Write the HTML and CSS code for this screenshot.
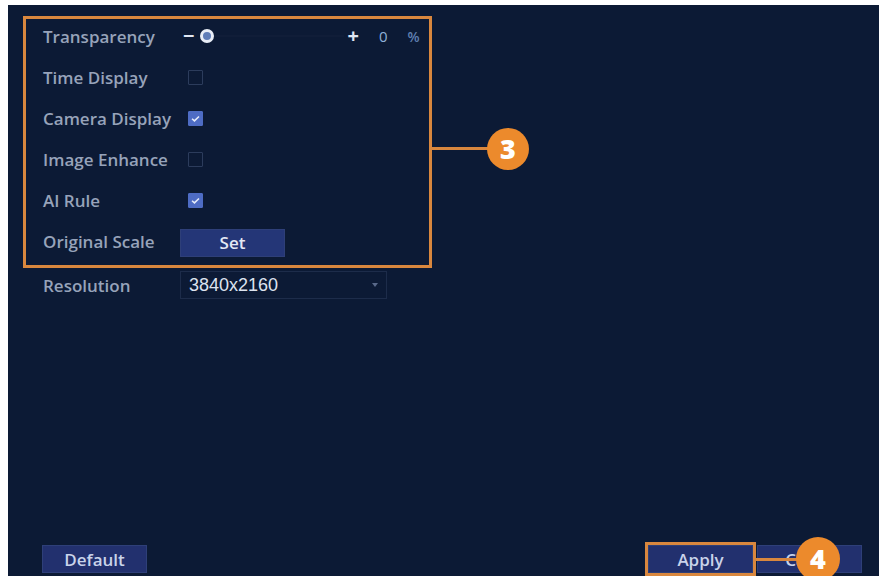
FILE: index.html
```html
<!DOCTYPE html>
<html lang="en">
<head>
  <meta charset="UTF-8" />
  <title>Display Settings</title>
  <link rel="stylesheet" href="styles.css">
</head>
<body>
  <div class="panel">
    <div class="callout-box">
      <div class="row">
        <span class="label">Transparency</span>
        <div class="slider">
          <span class="minus">&minus;</span>
          <span class="knob"></span>
          <span class="track"></span>
          <span class="plus">+</span>
          <span class="value">0</span>
          <span class="unit">%</span>
        </div>
      </div>
      <div class="row">
        <span class="label">Time Display</span>
        <span class="check"></span>
      </div>
      <div class="row">
        <span class="label">Camera Display</span>
        <span class="check on"><svg viewBox="0 0 15 15"><path d="M3.5 7.8 L6.3 10.2 L11.5 5.2" /></svg></span>
      </div>
      <div class="row">
        <span class="label">Image Enhance</span>
        <span class="check"></span>
      </div>
      <div class="row">
        <span class="label">AI Rule</span>
        <span class="check on"><svg viewBox="0 0 15 15"><path d="M3.5 7.8 L6.3 10.2 L11.5 5.2" /></svg></span>
      </div>
      <div class="row">
        <span class="label">Original Scale</span>
        <button class="btn set">Set</button>
      </div>
      <span class="callout-line line-3"></span>
      <span class="badge badge-3">3</span>
    </div>

    <div class="row plain">
      <span class="label">Resolution</span>
      <div class="select">
        <span>3840x2160</span>
        <span class="arrow"></span>
      </div>
    </div>

    <div class="spacer"></div>

    <div class="footer">
      <button class="btn">Default</button>
      <div class="actions">
        <button class="btn apply">Apply</button>
        <button class="btn cancel">Cancel</button>
        <span class="callout-line line-4"></span>
        <span class="badge badge-4">4</span>
      </div>
    </div>
  </div>
</body>
</html>
```

FILE: styles.css
```css
body {
  margin: 0;
  background: #fff;
  font-family: "Open Sans", Arial, sans-serif;
}
.panel {
  margin: 5px 0 0 8px;
  width: 871px;
  height: 571px;
  box-sizing: border-box;
  background: #0c1a35;
  display: flex;
  flex-direction: column;
  padding: 11px 0 0 15px;
}
.callout-box {
  position: relative;
  width: 409px;
  box-sizing: border-box;
  border: 3px solid #d9873e;
  padding-left: 17px;
}
.row {
  height: 41px;
  padding-bottom: 7px;
  box-sizing: border-box;
  display: flex;
  align-items: center;
}
.row.plain {
  height: 34px;
  padding: 0 0 0 20px;
}
.label {
  width: 137px;
  flex: none;
  font-size: 17px;
  font-weight: 600;
  color: #97a3ba;
}
.slider {
  display: flex;
  align-items: center;
  width: 240px;
  color: #dfe6f3;
}
.minus {
  font-size: 20px;
  font-weight: 700;
  margin: 0 6px 0 3px;
  line-height: 1;
}
.knob {
  width: 8px;
  height: 8px;
  border-radius: 50%;
  background: #5f7db8;
  border: 3px solid #e8edf6;
}
.track {
  width: 130px;
  height: 2px;
  background: #101d38;
  margin-right: 3px;
}
.plus {
  font-size: 20px;
  font-weight: 700;
  line-height: 1;
}
.value {
  margin-left: 20px;
  font-size: 15px;
  color: #8fb0d8;
}
.unit {
  margin-left: 20px;
  font-size: 14px;
  font-weight: 600;
  color: #5f7fb0;
}
.check {
  width: 15px;
  height: 15px;
  box-sizing: border-box;
  margin-left: 8px;
  border: 1px solid #2c3c5c;
  border-radius: 1px;
}
.check.on {
  background: #4e6cc4;
  border-color: #4e6cc4;
}
.check svg {
  display: block;
  width: 13px;
  height: 13px;
}
.check path {
  fill: none;
  stroke: #e6ecfa;
  stroke-width: 1.8;
}
.btn {
  width: 105px;
  height: 28px;
  border: 1px solid #2e3f78;
  background: #22306e;
  color: #c9d3ea;
  font-family: "Open Sans", Arial, sans-serif;
  font-size: 17px;
  font-weight: 600;
  padding: 0;
}
.btn.set {
  color: #e4e9f5;
  background: #243677;
  margin-top: 3px;
}
.btn.cancel {
  padding-left: 6px;
}
.select {
  width: 207px;
  height: 28px;
  box-sizing: border-box;
  border: 1px solid #1d2c4a;
  display: flex;
  align-items: center;
  justify-content: space-between;
  padding: 0 8px 0 8px;
  font-family: "Liberation Sans", Arial, sans-serif;
  font-size: 18px;
  color: #dde3ef;
}
.arrow {
  width: 0;
  height: 0;
  border-left: 3px solid transparent;
  border-right: 3px solid transparent;
  border-top: 4px solid #59698a;
}
.spacer {
  flex: 1;
}
.footer {
  display: flex;
  justify-content: space-between;
  align-items: center;
  padding: 0 17px 3px 19px;
}
.actions {
  position: relative;
  display: flex;
  gap: 4px;
}
.btn.apply {
  outline: 3px solid #d9873e;
}
.callout-line {
  position: absolute;
  height: 3px;
  background: #d9873e;
}
.line-3 {
  left: 406px;
  top: 128px;
  width: 56px;
}
.line-4 {
  left: 108px;
  top: 13px;
  width: 44px;
}
.badge {
  position: absolute;
  width: 42px;
  height: 42px;
  border-radius: 50%;
  background: #ec8a2c;
  color: #fff;
  font-family: "Open Sans", Arial, sans-serif;
  font-weight: 800;
  font-size: 27px;
  line-height: 42px;
  text-align: center;
}
.badge-3 {
  left: 461px;
  top: 109px;
}
.badge-4 {
  left: 148px;
  top: -8px;
  width: 44px;
  height: 44px;
  line-height: 44px;
}
```
